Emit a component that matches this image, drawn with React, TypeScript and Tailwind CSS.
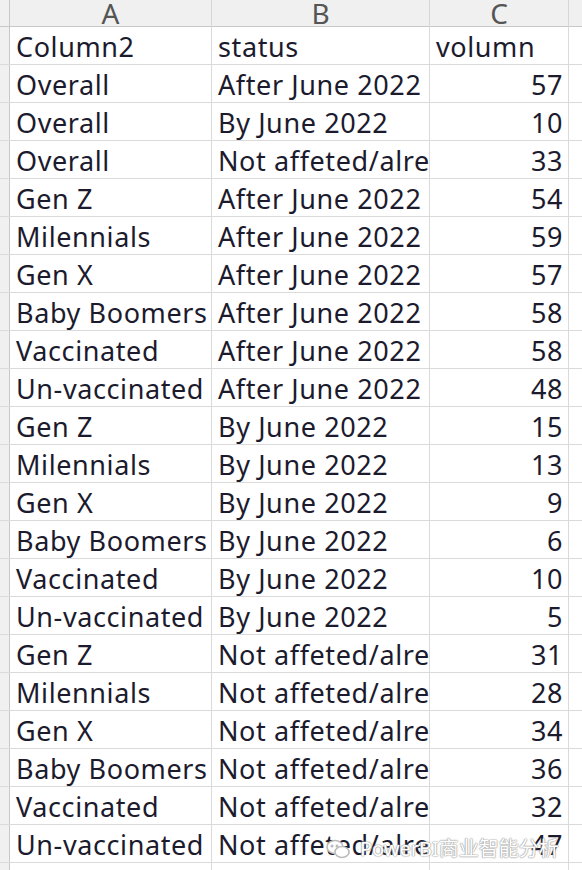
import React from "react";

const rows: [string, string, string][] = [
  ["Column2", "status", "volumn"],
  ["Overall", "After June 2022", "57"],
  ["Overall", "By June 2022", "10"],
  ["Overall", "Not affeted/already", "33"],
  ["Gen Z", "After June 2022", "54"],
  ["Milennials", "After June 2022", "59"],
  ["Gen X", "After June 2022", "57"],
  ["Baby Boomers", "After June 2022", "58"],
  ["Vaccinated", "After June 2022", "58"],
  ["Un-vaccinated", "After June 2022", "48"],
  ["Gen Z", "By June 2022", "15"],
  ["Milennials", "By June 2022", "13"],
  ["Gen X", "By June 2022", "9"],
  ["Baby Boomers", "By June 2022", "6"],
  ["Vaccinated", "By June 2022", "10"],
  ["Un-vaccinated", "By June 2022", "5"],
  ["Gen Z", "Not affeted/already", "31"],
  ["Milennials", "Not affeted/already", "28"],
  ["Gen X", "Not affeted/already", "34"],
  ["Baby Boomers", "Not affeted/already", "36"],
  ["Vaccinated", "Not affeted/already", "32"],
  ["Un-vaccinated", "Not affeted/already", "47"],
];

const cols = "grid grid-cols-[10px_202px_218px_139px_1fr]";

export default function App() {
  return (
    <div
      className="w-[582px] h-[870px] overflow-hidden bg-white relative text-[#1c1b2e]"
      style={{ fontFamily: '"Noto Sans", "Noto Sans CJK SC", sans-serif' }}
    >
      <div className={`${cols} h-[27px] bg-[#f0f0f0] border-b border-[#c8c8c8] text-[#555555] text-[28px] leading-[27px]`}>
        <div className="border-r border-[#c8c8c8]" />
        <div className="border-r border-[#d6d6d6] text-center">A</div>
        <div className="border-r border-[#d6d6d6] text-center">B</div>
        <div className="border-r border-[#d6d6d6] text-center">C</div>
        <div />
      </div>
      {rows.map((r, i) => (
        <div key={i} className={`${cols} h-[38px] border-b border-[#dadada] text-[27px] leading-[34px] tracking-[0.6px]`}>
          <div className="bg-[#f0f0f0] border-r border-[#c8c8c8]" />
          <div className="border-r border-[#dadada] pl-[6px] pt-[3px] whitespace-nowrap overflow-hidden">{r[0]}</div>
          <div className="border-r border-[#dadada] pl-[6px] pt-[3px] whitespace-nowrap overflow-hidden">{r[1]}</div>
          <div className={`border-r border-[#dadada] pt-[3px] whitespace-nowrap overflow-hidden ${i === 0 ? "pl-[6px]" : "text-right pr-[5px]"}`}>{r[2]}</div>
          <div />
        </div>
      ))}
      <div className={`${cols} h-[38px]`}>
        <div className="bg-[#f0f0f0] border-r border-[#c8c8c8]" />
        <div className="border-r border-[#dadada]" />
        <div className="border-r border-[#dadada]" />
        <div className="border-r border-[#dadada]" />
        <div />
      </div>
      <div className="absolute left-[326px] top-[837px] flex items-center gap-[10px] pointer-events-none">
        <svg width="24" height="22" viewBox="0 0 24 22" fill="none" stroke="#bbbbbb" strokeWidth="1.5">
          <ellipse cx="9" cy="9" rx="8" ry="6.5" fill="#fff" />
          <ellipse cx="16" cy="14" rx="7" ry="5.5" fill="#fff" />
          <circle cx="6" cy="8" r="0.8" fill="#bbbbbb" />
          <circle cx="11" cy="8" r="0.8" fill="#bbbbbb" />
        </svg>
        <span
          className="text-[20px] leading-[24px] text-white whitespace-nowrap"
          style={{ textShadow: "0 0 1px #999, 0 0 1px #999, 0 0 2px #aaa" }}
        >
          PowerBI商业智能分析
        </span>
      </div>
    </div>
  );
}
